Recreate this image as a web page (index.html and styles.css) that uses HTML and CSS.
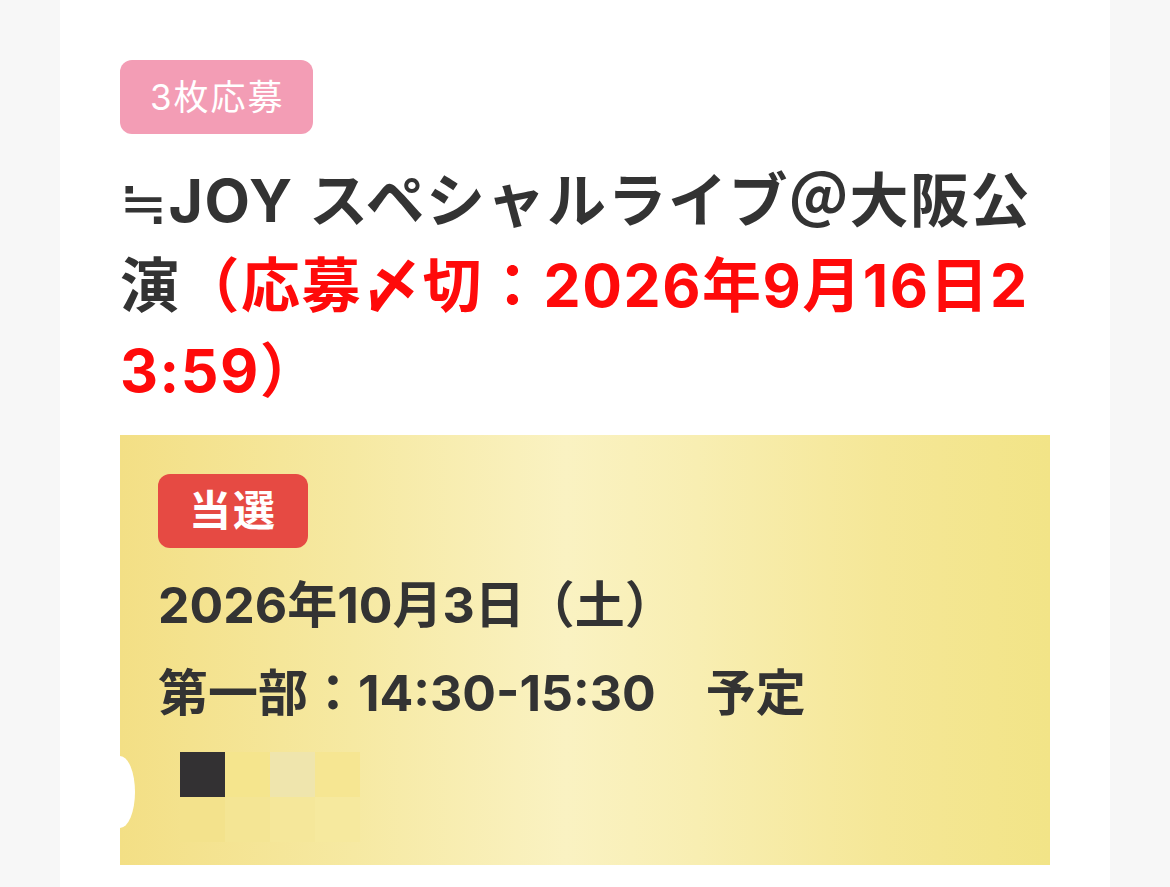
FILE: index.html
```html
<!DOCTYPE html>
<html lang="ja">
<head>
<meta charset="utf-8">
<link rel="stylesheet" href="styles.css">
</head>
<body>
<div class="card">
  <div class="apply-badge">3枚応募</div>
  <h1 class="title">≒JOY スペシャルライブ＠大阪公演<span class="deadline">（応募〆切：2026年9月16日23:59）</span></h1>
  <div class="result">
    <div class="win-badge">当選</div>
    <p class="info">2026年10月3日（土）</p>
    <p class="info">第一部：14:30-15:30　予定</p>
    <div class="blocks">
      <span class="blk dark"></span><span class="blk c1"></span><span class="blk c2"></span><span class="blk c3"></span>
      <span class="blk d0"></span><span class="blk d1"></span><span class="blk d2"></span><span class="blk d3"></span>
    </div>
    <span class="edge"></span>
  </div>
</div>
</body>
</html>
```

FILE: styles.css
```css
html, body {
  margin: 0;
  padding: 0;
  background: #f7f7f7;
}
body {
  font-family: "Inter", "Noto Sans CJK JP", sans-serif;
  color: #333333;
}
.card {
  margin: 0 60px;
  background: #ffffff;
  min-height: 887px;
  padding: 60px 60px 0;
  box-sizing: border-box;
}
.apply-badge {
  display: inline-block;
  background: #f39db5;
  color: #ffffff;
  font-size: 35px;
  letter-spacing: 2px;
  line-height: 74px;
  height: 74px;
  padding: 0 28px 0 30px;
  border-radius: 12px;
  font-weight: 400;
}
.title {
  margin: 24px 0 0;
  font-size: 59px;
  line-height: 85px;
  font-weight: 700;
  letter-spacing: 1.5px;
  color: #333333;
  word-break: break-all;
}
.deadline {
  color: #ff0a0a;
}
.result {
  position: relative;
  margin-top: 22px;
  padding: 39px 38px 23px;
  background: linear-gradient(90deg, #f3df85 0%, #f6e9a2 25%, #faf2c2 48%, #f8eeb2 62%, #f5e797 82%, #f2e487 100%);
}
.win-badge {
  display: inline-block;
  background: #e64a43;
  color: #ffffff;
  font-size: 42px;
  font-weight: 700;
  letter-spacing: 2px;
  height: 74px;
  line-height: 74px;
  padding: 0 31px;
  border-radius: 12px;
}
.info {
  margin: 0;
  font-size: 50px;
  line-height: 88px;
  font-weight: 700;
  color: #333333;
}
.result .win-badge + .info {
  margin-top: 13px;
}
.blocks {
  margin: 15px 0 0 22px;
  display: grid;
  grid-template-columns: repeat(4, 45px);
  grid-auto-rows: 45px;
}
.blk { display: block; }
.dark { background: #333133; }
.c1 { background: #f5e58d; }
.c2 { background: #efe5ad; }
.c3 { background: #f6e692; }
.d0 { background: #f3e28c; }
.d1 { background: #f4e594; }
.d2 { background: #f5e79a; }
.d3 { background: #f6e99e; }
.edge {
  position: absolute;
  left: -15px;
  top: 321px;
  width: 30px;
  height: 72px;
  border-radius: 50%;
  background: #ffffff;
}
```
